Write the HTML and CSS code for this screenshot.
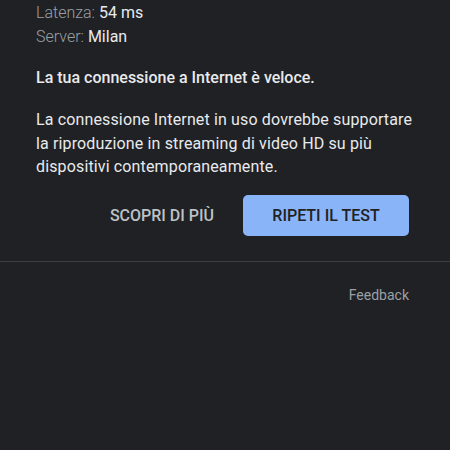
FILE: index.html
```html
<!DOCTYPE html>
<html lang="it">

<head>
  <meta charset="UTF-8" />
  <meta name="viewport" content="width=device-width, initial-scale=1.0" />
  <title>Test velocità</title>
  <link rel="stylesheet" href="styles.css">
</head>

<body>
  <div class="result">
    <p class="stat"><span class="label">Latenza:</span> 54 ms</p>
    <p class="stat"><span class="label">Server:</span> Milan</p>
    <h3>La tua connessione a Internet è veloce.</h3>
    <p class="desc">La connessione Internet in uso dovrebbe supportare la riproduzione in streaming di video HD su più dispositivi contemporaneamente.</p>
    <div class="actions">
      <button class="text-btn">Scopri di più</button>
      <button class="main-btn">Ripeti il test</button>
    </div>
  </div>
  <div class="footer">
    <a href="#">Feedback</a>
  </div>
</body>

</html>
```
FILE: styles.css
```css
body {
  margin: 0;
  background: #202124;
  font-family: Roboto, "Liberation Sans", Arial, sans-serif;
  color: #e8eaed;
}

.result {
  padding: 1px 41px 25px 36px;
  border-bottom: 1px solid #3c4043;
}

.stat {
  font-size: 16px;
  line-height: 24px;
  margin: 0;
}

.label {
  font-weight: 300;
  color: #9aa0a6;
}

h3 {
  font-size: 16px;
  font-weight: 500;
  line-height: 24px;
  margin: 17px 0 0;
}

.desc {
  font-size: 16px;
  letter-spacing: 0.14px;
  line-height: 23.5px;
  margin: 18px -10px 0 0;
}

.actions {
  display: flex;
  justify-content: flex-end;
  align-items: center;
  gap: 8px;
  margin-top: 16px;
}

button {
  font-family: inherit;
  font-size: 16px;
  font-weight: 500;
  text-transform: uppercase;
  border: none;
  border-radius: 5px;
  height: 41px;
  cursor: pointer;
}

.text-btn {
  background: none;
  color: #bdc1c6;
  padding: 0 21px;
}

.main-btn {
  background: #8ab4f8;
  color: #202124;
  width: 166px;
}

.footer {
  display: flex;
  justify-content: flex-end;
  padding: 25px 41px 0 0;
}

.footer a {
  font-size: 14px;
  color: #9aa0a6;
  text-decoration: none;
}
```
